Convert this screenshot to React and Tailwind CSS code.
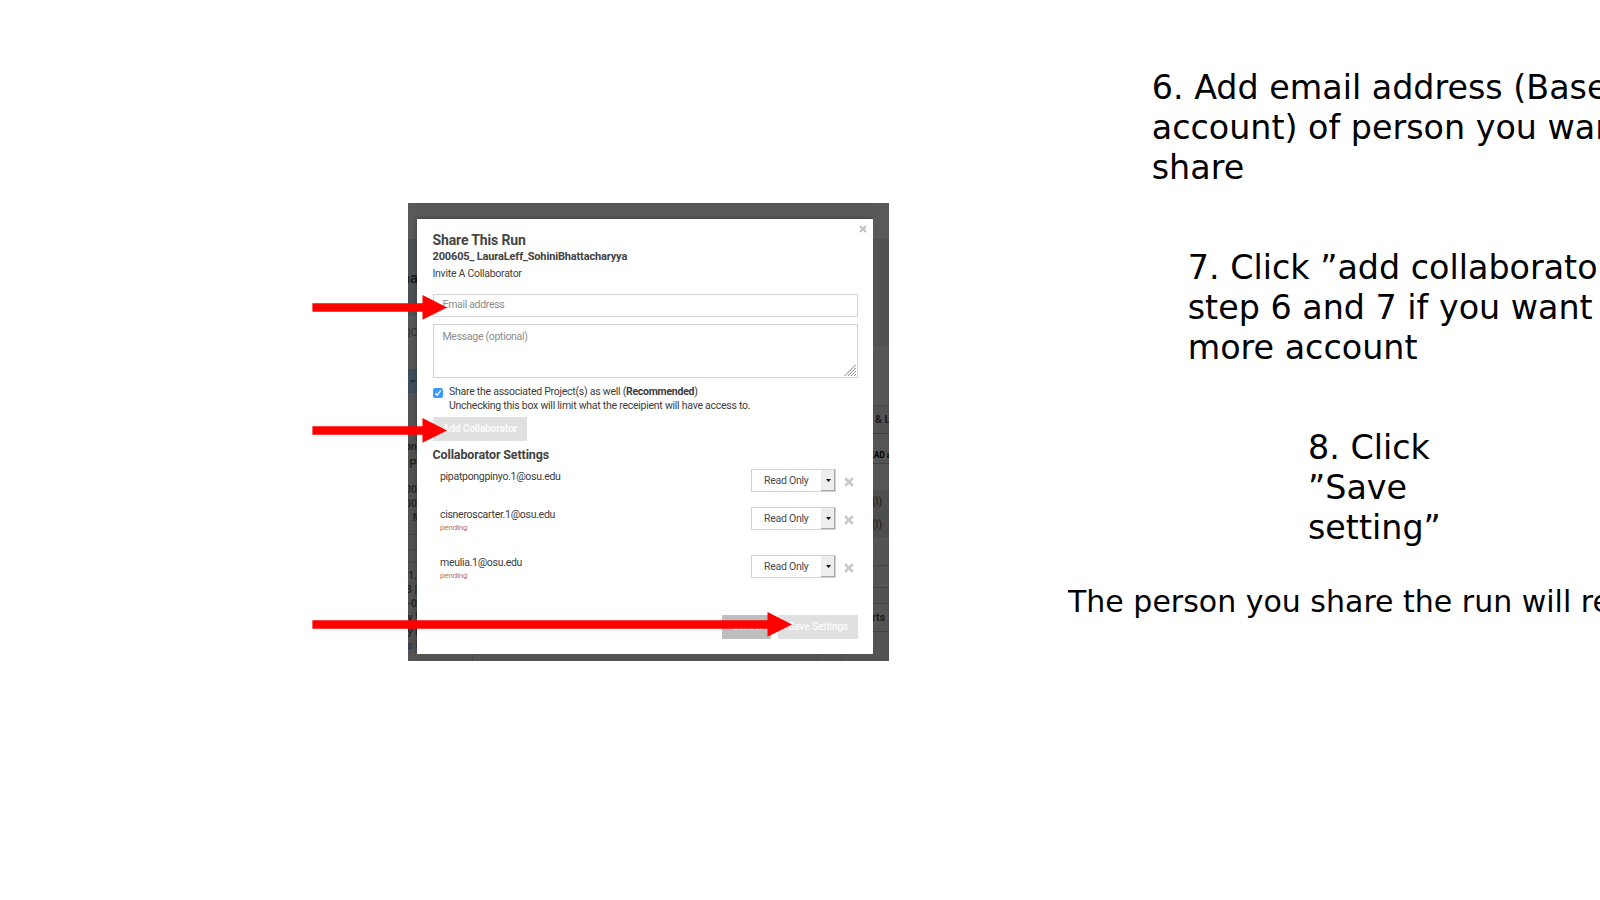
const leftStrip = [
  { h: 36, bg: "bg-[#595959]" },
  { h: 28, bg: "bg-[#4d5054]" },
  { h: 24, bg: "bg-[#4d5054]", text: "na", cls: "text-[15px] font-bold text-[#1c1c1e] leading-[23px] -mr-px" },
  { h: 25, bg: "bg-[#4d5054]" },
  { h: 9, bg: "bg-[#555555]" },
  { h: 16, bg: "bg-[#555555]", text: "QC", cls: "text-[10.5px] tracking-[-0.25px] text-[#2f2f2f] leading-[16px]" },
  { h: 28, bg: "bg-[#555555]" },
  { h: 24, bg: "bg-[#3e4d5b]", caret: true },
  { h: 45, bg: "bg-[#525252]" },
  { h: 18, bg: "bg-[#515151]", text: "on", cls: "text-[11px] font-bold text-[#222222] leading-[18px]" },
  { h: 18, bg: "bg-[#515151]", text: "P", cls: "text-[12px] font-medium text-[#222222] leading-[17px]" },
  { h: 8, bg: "bg-[#515151]" },
  { h: 15, bg: "bg-[#515151]", text: "00", cls: "text-[10.5px] font-medium text-[#222222] leading-[15px]" },
  { h: 14, bg: "bg-[#515151]", text: "00", cls: "text-[10.5px] font-medium text-[#222222] leading-[14px]" },
  { h: 14, bg: "bg-[#515151]", text: "M", cls: "text-[10.5px] font-medium text-[#222222] leading-[14px] -mr-[5px]" },
  { h: 10, bg: "bg-[#515151] border-b border-dotted border-[#404040]" },
  { h: 15, bg: "bg-[#515151] border-b border-dotted border-[#404040]" },
  { h: 13, bg: "bg-[#515151] border-b border-dotted border-[#404040]" },
  { h: 6, bg: "bg-[#515151]" },
  { h: 14, bg: "bg-[#515151]", text: "11.", cls: "text-[10.5px] font-medium text-[#222222] leading-[14px]" },
  { h: 14, bg: "bg-[#515151]", text: "8 |", cls: "text-[10.5px] font-medium text-[#222222] leading-[14px]" },
  { h: 14, bg: "bg-[#515151]", text: "-0", cls: "text-[10.5px] font-medium text-[#222222] leading-[14px]" },
  { h: 14, bg: "bg-[#515151]", text: "y V", cls: "text-[10.5px] font-medium text-[#222222] leading-[14px] -mr-[5px]" },
  { h: 14, bg: "bg-[#515151]", text: "y (", cls: "text-[10.5px] font-medium text-[#222222] leading-[14px] -mr-[2px]" },
  { h: 14, bg: "bg-[#515151]", text: "s (", cls: "text-[10.5px] font-medium text-[#1f3a5c] leading-[14px] -mr-[2px]" },
  { h: 8, bg: "bg-[#555555]" },
];

const rightStrip = [
  { h: 36, bg: "bg-[#595959]" },
  { h: 107, bg: "bg-[#505352]" },
  { h: 60, bg: "bg-[#565656] border-b border-[#484848]" },
  { h: 28, bg: "bg-[#525252] border-b border-[#404040]", text: "& L", cls: "text-[10.5px] font-bold text-[#1b1b1b] leading-[28px] pl-[2px]" },
  { h: 13, bg: "bg-[#555555]" },
  { h: 17, bg: "bg-[#555555] border-b border-[#454545]", text: "EAD a", cls: "text-[8.5px] tracking-[-0.1px] font-bold text-black leading-[16px] -ml-[4px]" },
  { h: 26, bg: "bg-[#555555]" },
  { h: 24, bg: "bg-[#4f4f4f]", text: "(I)", cls: "text-[10.5px] text-[#1b1b1b] leading-[24px] -ml-px" },
  { h: 23, bg: "bg-[#4d4d4d]", text: "(I)", cls: "text-[10.5px] text-[#1b1b1b] leading-[21px] -ml-px" },
  { h: 29, bg: "bg-[#545454] border-b border-[#434343]" },
  { h: 22, bg: "bg-[#545454] border-b border-[#434343]" },
  { h: 16, bg: "bg-[#515151] border-b border-[#434343]" },
  { h: 28, bg: "bg-[#545454] border-b border-[#434343]", text: "rts", cls: "text-[10.5px] font-bold text-[#1b1b1b] leading-[28px] -ml-px" },
  { h: 29, bg: "bg-[#545454]" },
];

function Strip({ rows, align }) {
  return (
    <div className={align === "end" ? "w-[9px] overflow-hidden" : "w-[16px] overflow-hidden"}>
      {rows.map((row, i) => (
        <div
          key={i}
          className={`flex overflow-hidden whitespace-nowrap ${align === "end" ? "justify-end" : "justify-start"} ${row.bg}`}
          style={{ height: row.h }}
        >
          {row.text && <span className={row.cls}>{row.text}</span>}
          {row.caret && (
            <svg className="mr-[2px] mt-[11px] h-[3px] w-[5px]" viewBox="0 0 5 3">
              <path d="M0 0h5L2.5 3z" fill="#16283a" />
            </svg>
          )}
        </div>
      ))}
    </div>
  );
}

function Cross({ className }) {
  return (
    <svg className={className} viewBox="0 0 10 10" fill="none">
      <path d="M1.2 1.2l7.6 7.6M8.8 1.2L1.2 8.8" stroke="currentColor" strokeWidth="2.8" />
    </svg>
  );
}

function Access() {
  return (
    <div className="flex items-center">
      <div className="flex h-[23px] w-[85px] border border-[#d2d2d2]">
        <span className="w-[69px] pl-[12px] text-[10.5px] leading-[21px] tracking-[-0.25px] text-[#4a4a4a]">Read Only</span>
        <span className="flex w-[14px] items-center justify-center border-b border-r border-[#a6a6a6] bg-[#eeeeee]">
          <svg className="ml-px h-[3px] w-[5px]" viewBox="0 0 5 3">
            <path d="M0 0h5L2.5 3z" fill="#111111" />
          </svg>
        </span>
      </div>
      <Cross className="ml-[8px] mt-[2px] h-[10px] w-[10px] text-[#cacaca]" />
    </div>
  );
}

function Person({ name, pending, className, accessClass }) {
  return (
    <div className={`flex items-start justify-between pl-[7.5px] pr-[4px] ${className}`}>
      <div className="pt-px">
        <div className="text-[10.5px] leading-[14px] tracking-[-0.29px] text-[#3c3c3c]">{name}</div>
        {pending && <div className="text-[8px] leading-[11px] tracking-[-0.17px] text-[#c4684f]">pending</div>}
      </div>
      <div className={accessClass}>
        <Access />
      </div>
    </div>
  );
}

function Arrow({ length, className }) {
  return (
    <svg className={`absolute h-[25px] ${className}`} style={{ width: length }} viewBox={`0 0 ${length} 25`}>
      <path d={`M0.4 8.2H${length - 24.5}V0L${length} 12.4L${length - 24.5} 24.8V16.7H0.4Z`} fill="#ff0000" />
    </svg>
  );
}

function Dialog() {
  return (
    <div className="h-[435px] w-[456.5px] bg-white pl-[15.5px] pr-[15.5px] shadow-[0_0_4px_rgba(0,0,0,0.35)]">
      <div className="flex h-[14px] justify-end pt-[6px]">
        <Cross className="-mr-[8.5px] h-[8px] w-[8px] text-[#c2c2c2]" />
      </div>
      <h1 className="h-[14px] text-[14px] font-bold leading-[14px] tracking-[-0.14px] text-[#454545]">Share This Run</h1>
      <h2 className="mt-[2px] text-[11px] font-bold leading-[15px] tracking-[-0.15px] text-[#424242]">
        200605_ LauraLeff_SohiniBhattacharyya
      </h2>
      <div className="mt-[3px] text-[10.5px] leading-[14px] tracking-[-0.27px] text-[#3f3f3f]">Invite A Collaborator</div>
      <div className="mt-[13px] h-[23px] border border-[#d4d4d4] pl-[9px] text-[10.5px] leading-[20px] tracking-[-0.32px] text-[#8c8c8c]">
        Email address
      </div>
      <div className="mt-[7px] flex h-[54px] justify-between border border-[#d0d0d0] pl-[9px] text-[10.5px] leading-[24px] tracking-[-0.3px] text-[#8c8c8c]">
        Message (optional)
        <svg className="mb-[1px] mr-[1px] h-[12px] w-[12px] self-end" viewBox="0 0 12 12">
          <path d="M0.5 12L12 0.5M3.8 12L12 3.8M7 12L12 7M10 12L12 10" stroke="#777777" strokeWidth="0.9" />
        </svg>
      </div>
      <div className="mt-[7px] flex">
        <span className="mt-[3px] flex h-[10px] w-[10px] items-center justify-center rounded-[2px] bg-[#3b99fc]">
          <svg className="h-[8px] w-[8px]" viewBox="0 0 8 8" fill="none">
            <path d="M1.3 4.3L3.2 6.3L6.7 1.3" stroke="#ffffff" strokeWidth="1.3" />
          </svg>
        </span>
        <div className="ml-[6.5px] h-[28px] whitespace-nowrap text-[10.5px] leading-[14px] tracking-[-0.255px] text-[#3c3c3c]">
          <div>
            Share the associated Project(s) as well (<b>Recommended</b>)
          </div>
          <div>Unchecking this box will limit what the receipient will have access to.</div>
        </div>
      </div>
      <div className="mt-[4px] h-[24px] w-[94px] bg-[#e0e0e0] pl-[10px] text-[10.5px] font-bold leading-[23px] tracking-[-0.33px] text-[#fafafa]">
        Add Collaborator
      </div>
      <h3 className="mt-[6px] text-[12.5px] font-bold leading-[16px] tracking-[-0.13px] text-[#424242]">Collaborator Settings</h3>
      <Person name="pipatpongpinyo.1@osu.edu" className="mt-[6px] h-[24px]" accessClass="" />
      <Person name="cisneroscarter.1@osu.edu" pending className="mt-[14px] h-[24px]" accessClass="" />
      <Person name="meulia.1@osu.edu" pending className="mt-[24px] h-[24px]" accessClass="" />
      <div className="mt-[36px] flex justify-end gap-[7px] text-[10.5px] font-medium leading-[24px] tracking-[-0.33px] text-[#fafafa]">
        <span className="h-[24px] w-[49.5px] bg-[#bebebe] pl-[10px]">Cancel</span>
        <span className="h-[24px] w-[80px] bg-[#e0e0e0] pl-[10px]">Save Settings</span>
      </div>
    </div>
  );
}

function Step({ lines, className }) {
  return (
    <div className={className}>
      {lines.map((line) => (
        <div key={line}>{line}</div>
      ))}
    </div>
  );
}

export default function App() {
  return (
    <main className="relative flex h-[900px] w-[1600px] overflow-hidden bg-white">
      <figure className="ml-[408px] mt-[203px] flex h-[458px] w-[481px] shrink-0 overflow-hidden font-[Roboto,sans-serif]">
        <Strip rows={leftStrip} align="end" />
        <div className="flex w-[456px] flex-col">
          <div className="h-[16px] bg-[#575757]" />
          <Dialog />
          <div className="flex h-[7px] bg-[#545454]">
            <div className="w-[56px] border-r border-[#484848]" />
            <div className="w-[345px] border-r border-[#484848]" />
            <div className="w-[24px] border-r border-[#484848]" />
          </div>
        </div>
        <Strip rows={rightStrip} align="start" />
      </figure>
      <section className="ml-[179px] w-[532px] overflow-hidden whitespace-nowrap pt-[68px] font-['DejaVu_Sans',sans-serif] text-[33.33px] leading-[40px] text-black">
        <Step className="ml-[83.75px]" lines={["6. Add email address (Base", "account) of person you wan", "share"]} />
        <Step className="ml-[119.75px] mt-[60px]" lines={["7. Click ”add collaborato", "step 6 and 7 if you want", "more account"]} />
        <Step className="ml-[240px] mt-[60px]" lines={["8. Click", "”Save", "setting”"]} />
        <p className="mt-[36px] text-[30px] leading-[36px]">The person you share the run will rec</p>
      </section>
      <Arrow length={135} className="left-[312px] top-[295px]" />
      <Arrow length={135} className="left-[312px] top-[418px]" />
      <Arrow length={480} className="left-[312px] top-[612px]" />
    </main>
  );
}
